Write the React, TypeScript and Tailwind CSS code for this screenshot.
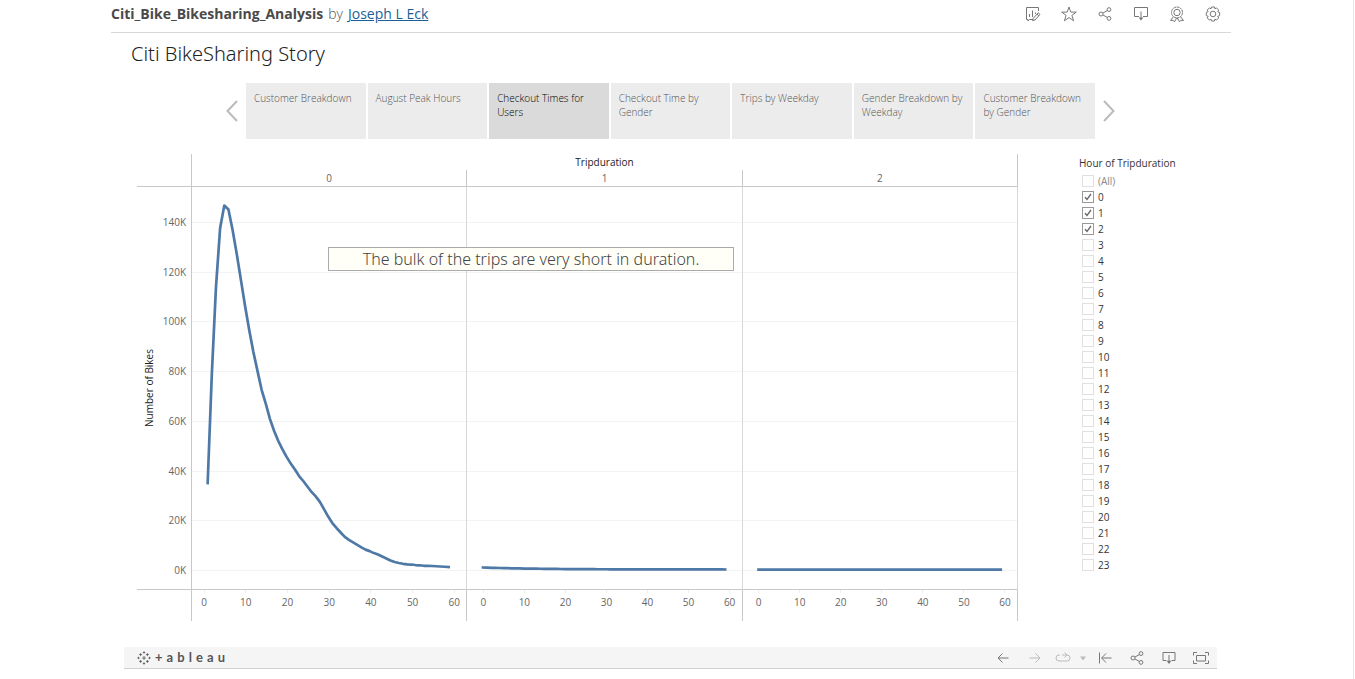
import { useState, type ReactNode } from "react";

const STORY_POINTS = [
  "Customer Breakdown",
  "August Peak Hours",
  "Checkout Times for Users",
  "Checkout Time by Gender",
  "Trips by Weekday",
  "Gender Breakdown by Weekday",
  "Customer Breakdown by Gender",
];

const Y_TICKS = [140, 120, 100, 80, 60, 40, 20, 0];
const X_TICKS = [0, 10, 20, 30, 40, 50, 60];

// Thousands of trips for each minute within the hour.
const HOUR_0 = [
  35.2, 79, 114, 137.8, 146.8, 145.2, 137, 127.3, 116.9, 106.4, 96.7, 87.9, 80.2, 72.6, 67, 60.9, 56.1, 52.1, 48.7,
  45.7, 43, 40.6, 38, 36, 33.8, 31.6, 29.8, 27.6, 24.7, 21.7, 19.1, 17.1, 15.3, 13.5, 12.3, 11.3, 10.3, 9.3, 8.4, 7.8,
  7, 6.4, 5.6, 4.8, 4, 3.4, 3, 2.7, 2.5, 2.4, 2.2, 2.1, 1.9, 1.9, 1.8, 1.7, 1.6, 1.5, 1.4,
];
const HOUR_1 = Array.from({ length: 60 }, (_, m) => 0.4 + 0.8 * Math.exp(-m / 14));
const HOUR_2 = Array.from({ length: 60 }, () => 0.35);

const PANES = [
  { label: "0", start: 1, values: HOUR_0, origin: 11.5, unit: 4.15, axis: "pl-0.5 pr-0.5" },
  { label: "1", start: 0, values: HOUR_1, origin: 16, unit: 4.1, axis: "pl-1.5 pr-0.5" },
  { label: "2", start: 0, values: HOUR_2, origin: 15.5, unit: 4.1, axis: "pl-1.5 pr-0.5" },
];

const PLOT_HEIGHT = 402;
const yOf = (k: number) => 383.5 - k * 2.486;

function Icon({ children, className = "size-4", box = 16 }: { children: ReactNode; className?: string; box?: number }) {
  return (
    <svg
      viewBox={`0 0 ${box} ${box}`}
      className={className}
      fill="none"
      stroke="currentColor"
      strokeWidth="1"
      aria-hidden="true"
    >
      {children}
    </svg>
  );
}

function IconButton({ label, children, disabled }: { label: string; children: ReactNode; disabled?: boolean }) {
  return (
    <button type="button" aria-label={label} disabled={disabled} className="text-[#777] disabled:text-[#bbb]">
      {children}
    </button>
  );
}

const EditIcon = () => (
  <Icon>
    <path d="M8 13.5H4.5l-1.5 1.5v-1.5H1.5v-12h12V5M4.5 8v3M7.500 4.500V11M10.500 6.500V8" />
    <path d="m8.200 12.400 5-5.600 1.800 1.600-5 5.600-2.300.7zM12 8.200l1.800 1.600" />
  </Icon>
);
const StarIcon = () => (
  <Icon>
    <path d="m8 1 1.800 5.100h5.500l-4.400 3.300 1.700 5.400L8 11.500l-4.600 3.300 1.700-5.400L.7 6.100h5.500z" />
  </Icon>
);
const ShareIcon = () => (
  <Icon>
    <circle cx="4" cy="8" r="2" />
    <circle cx="12" cy="3.600" r="1.900" />
    <circle cx="12" cy="12.400" r="1.900" />
    <path d="M6 7 10.300 4.600M6 9l4.300 2.400" />
  </Icon>
);
const DownloadIcon = () => (
  <Icon>
    <path d="M6 10.500H1.500v-9h13v9H10M8 5.500v8" />
    <path d="M5.600 11.500h4.800L8 14.500z" fill="currentColor" stroke="none" />
  </Icon>
);
const AwardIcon = () => (
  <Icon>
    <circle cx="8" cy="6.500" r="5.500" strokeDasharray="2.600 .5" />
    <circle cx="8" cy="6.500" r="3.200" />
    <path d="M4.300 10.800 1.500 14.500l2.700-.2 1.300 1.500 2.300-4M11.700 10.800l2.800 3.700-2.700-.2-1.300 1.500-2.300-4" />
  </Icon>
);
const GearIcon = () => (
  <Icon>
    <path d="M6.500 1h3l.4 1.800 1.600-.9 2.200 2.200-1 1.600 1.900.7v3.200l-1.900.7 1 1.600-2.200 2.200-1.600-1-.4 1.900h-3l-.5-1.900-1.600 1-2.200-2.200 1-1.600-1.900-.7V6.400l1.900-.7-1-1.600 2.200-2.200 1.600.9z" />
    <circle cx="8" cy="8" r="2.800" />
  </Icon>
);

function Header() {
  return (
    <header className="flex h-[33px] items-center justify-between border-b border-[#d8d8d8] pb-1 pr-2.5">
      <div className="flex items-baseline gap-[5px] text-sm">
        <h1 className="font-bold text-[#4a4a4a]">Citi_Bike_Bikesharing_Analysis</h1>
        <span className="font-light text-[#555]">by</span>
        <a href="#author" className="text-[#1a5f96] underline">
          Joseph L Eck
        </a>
      </div>
      <nav aria-label="Workbook actions" className="flex items-center gap-5">
        <IconButton label="Edit"><EditIcon /></IconButton>
        <IconButton label="Favorite"><StarIcon /></IconButton>
        <IconButton label="Share"><ShareIcon /></IconButton>
        <IconButton label="Download"><DownloadIcon /></IconButton>
        <IconButton label="Nominate"><AwardIcon /></IconButton>
        <IconButton label="Settings"><GearIcon /></IconButton>
      </nav>
    </header>
  );
}

function StoryNav({ active, onSelect }: { active: number; onSelect: (i: number) => void }) {
  return (
    <nav aria-label="Story points" className="ml-[102px] mr-[103px] flex items-center gap-2">
      <button type="button" aria-label="Previous" onClick={() => onSelect(Math.max(0, active - 1))} className="w-3 text-[#bbb]">
        <svg viewBox="0 0 12 22" className="h-[22px] w-3" fill="none" stroke="currentColor" strokeWidth="2">
          <path d="M11 1 1.500 11 11 21" />
        </svg>
      </button>
      <div className="grid flex-1 grid-cols-7 gap-0.5">
        {STORY_POINTS.map((point, i) => (
          <button
            key={point}
            type="button"
            onClick={() => onSelect(i)}
            className={`flex h-14 items-start p-2 text-left text-[10px] font-light leading-[14px] ${
              i === active ? "bg-[#dadada] text-black" : "bg-[#ececec] text-[#555]"
            }`}
          >
            {point}
          </button>
        ))}
      </div>
      <button
        type="button"
        aria-label="Next"
        onClick={() => onSelect(Math.min(STORY_POINTS.length - 1, active + 1))}
        className="w-3 text-[#bbb]"
      >
        <svg viewBox="0 0 12 22" className="h-[22px] w-3" fill="none" stroke="currentColor" strokeWidth="2">
          <path d="m1 1 9.500 10L1 21" />
        </svg>
      </button>
    </nav>
  );
}

function Chart() {
  return (
    <figure className="relative flex-1 text-[10px] leading-4 text-[#666]">
      <div className="grid grid-cols-[55px_repeat(3,1fr)]">
        <div className="row-span-2 border-b border-r border-[#c8c8c8]" />
        <div className="col-span-3 border-r border-[#c8c8c8] text-center text-[#222]">Tripduration</div>
        {PANES.map((pane) => (
          <div key={pane.label} className="h-[17px] border-b border-r border-[#c8c8c8] text-center">
            {pane.label}
          </div>
        ))}

        <div className="flex justify-between border-b border-r border-[#c8c8c8] pr-[5px]">
          <span className="rotate-180 self-center pr-1 text-center text-[#222] [writing-mode:vertical-rl]">
            Number of Bikes
          </span>
          <div className="flex flex-col justify-between pb-3 pt-7 text-right leading-[14px]">
            {Y_TICKS.map((t) => (
              <span key={t}>{t}K</span>
            ))}
          </div>
        </div>
        {PANES.map((pane) => (
          <div key={pane.label} className="h-[403px] border-b border-r border-b-[#c8c8c8] border-r-[#d8d8d8]">
            <svg
              viewBox={`0 0 274 ${PLOT_HEIGHT}`}
              preserveAspectRatio="none"
              className="block h-[402px] w-full"
              role="img"
              aria-label={`Number of bikes by minute, hour ${pane.label}`}
            >
              {Y_TICKS.map((t) => (
                <line
                  key={t}
                  x1="0"
                  x2="274"
                  y1={Math.floor(yOf(t)) + 0.5}
                  y2={Math.floor(yOf(t)) + 0.5}
                  stroke="#f3f3f3"
                />
              ))}
              <polyline
                fill="none"
                stroke="#4e79a7"
                strokeWidth="2.700"
                strokeLinejoin="round"
                strokeLinecap="square"
                vectorEffect="non-scaling-stroke"
                points={pane.values.map((v, i) => `${pane.origin + (i + pane.start) * pane.unit},${yOf(v)}`).join(" ")}
              />
            </svg>
          </div>
        ))}

        <div className="border-r border-[#c8c8c8]" />
        {PANES.map((pane) => (
          <div key={pane.label} className={`flex h-[31px] justify-between border-r border-[#c8c8c8] ${pane.axis}`}>
            {X_TICKS.map((t) => (
              <span key={t} className="flex w-5 flex-col items-center">
                <i className="h-[3px] w-px bg-[#eee]" />
                <span className="pt-px">{t}</span>
              </span>
            ))}
          </div>
        ))}
      </div>
      <figcaption className="absolute left-[191px] top-[93px] flex h-6 w-[406px] items-center justify-center border border-[#aaa] bg-[#fffff8] font-['Noto_Sans',sans-serif] text-base font-light text-[#444]">
        The bulk of the trips are very short in duration.
      </figcaption>
    </figure>
  );
}

function HourFilter() {
  const [selected, setSelected] = useState<string[]>(["0", "1", "2"]);
  const options = ["(All)", ...Array.from({ length: 24 }, (_, i) => String(i))];
  const toggle = (o: string) => setSelected((s) => (s.includes(o) ? s.filter((x) => x !== o) : [...s, o]));
  return (
    <fieldset className="w-[138px] pt-px text-[10px] leading-4 text-[#333]">
      <legend className="pb-px pt-px">Hour of Tripduration</legend>
      {options.map((o) => (
        <label key={o} className="flex h-4 items-center gap-1 pl-[3px]">
          <span className="grid size-3">
            <input
              type="checkbox"
              checked={selected.includes(o)}
              onChange={() => toggle(o)}
              className="peer col-start-1 row-start-1 size-3 appearance-none border border-[#e0e0e0] bg-white checked:border-[#999]"
            />
            <svg
              viewBox="0 0 12 12"
              className="pointer-events-none invisible col-start-1 row-start-1 size-3 peer-checked:visible"
              fill="none"
              stroke="#666"
              strokeWidth="1.300"
            >
              <path d="M3 6.200 5 8.500 9 3" />
            </svg>
          </span>
          <span className={o === "(All)" ? "text-[#888]" : ""}>{o}</span>
        </label>
      ))}
    </fieldset>
  );
}

function TableauMark() {
  const plus = (x: number, y: number, r: number) => `M${x - r} ${y}h${2 * r}M${x} ${y - r}v${2 * r}`;
  return (
    <Icon className="size-3.5" box={14}>
      <path
        strokeWidth=".8"
        d={[
          plus(7, 7, 2),
          plus(7, 1.5, 1.2),
          plus(7, 12.5, 1.2),
          plus(1.5, 7, 1.2),
          plus(12.5, 7, 1.2),
          plus(3.6, 3.6, 1.5),
          plus(10.4, 3.6, 1.5),
          plus(3.6, 10.4, 1.5),
          plus(10.4, 10.4, 1.5),
        ].join("")}
      />
    </Icon>
  );
}

function Toolbar() {
  return (
    <footer className="ml-[13px] mr-3.5 flex h-[22px] items-center justify-between border-b border-[#cfcfcf] bg-[#f5f5f5] pl-[13px] pr-2">
      <a href="#tableau" aria-label="Tableau" className="flex items-center gap-1 text-[#555]">
        <TableauMark />
        <span className="flex w-[70px] justify-between pb-0.5 font-['Lato',sans-serif] text-[13px] font-bold leading-4">
          {"+ableau".split("").map((c, i) => (
            <span key={i}>{c}</span>
          ))}
        </span>
      </a>
      <div className="flex items-center gap-4">
        <div className="flex items-center gap-3">
          <div className="flex items-center gap-4">
            <IconButton label="Undo">
              <Icon><path d="M13.500 8H3M7.500 3.500 3 8l4.500 4.500" /></Icon>
            </IconButton>
            <IconButton label="Redo" disabled>
              <Icon><path d="M2.500 8H13M8.500 3.500 13 8l-4.500 4.500" /></Icon>
            </IconButton>
          </div>
          <div className="flex items-center gap-2">
            <IconButton label="Replay" disabled>
              <Icon>
                <path d="M5 5H4Q1 5 1 8t3 3h8q3 0 3-3t-3-3H7M9.500 2.500 12 5 9.500 7.500" />
              </Icon>
            </IconButton>
            <IconButton label="Replay options" disabled>
              <svg viewBox="0 0 8 16" className="h-4 w-2" fill="currentColor" aria-hidden="true">
                <path d="M1 6.500h6L4 10.500z" />
              </svg>
            </IconButton>
            <IconButton label="Revert">
              <span className="block pl-0.5">
                <Icon><path d="M2.500 2.500v11M14.500 8H5M9 3.500 4.500 8 9 12.500" /></Icon>
              </span>
            </IconButton>
          </div>
        </div>
        <IconButton label="Share view"><ShareIcon /></IconButton>
        <IconButton label="Download view">
          <Icon>
            <path d="M5.500 10.500h-3.500v-8h12v8h-3.500M8 5v8" />
            <path d="M5.600 10.800h4.800L8 14z" fill="currentColor" stroke="none" />
          </Icon>
        </IconButton>
        <IconButton label="Full screen">
          <Icon>
            <path d="M3.500 5.500h9v5.500h-9zM.5 5.500v-3H4M12 2.500h3.500v3M15.500 10.500v3H12M4 13.500H.5v-3" />
          </Icon>
        </IconButton>
      </div>
    </footer>
  );
}

export default function App() {
  const [active, setActive] = useState(2);
  return (
    <div className="mr-px min-h-screen border-r border-[#e8e8e8] bg-white pr-[11px] font-['Open_Sans','Noto_Sans',sans-serif]">
      <div className="mx-auto w-full max-w-[1120px]">
        <Header />
        <main className="px-[13px]">
          <h2 className="pb-[15px] pl-[7px] pt-[7px] font-['Noto_Sans',sans-serif] text-xl font-light leading-7 text-[#222]">
            Citi BikeSharing Story
          </h2>
          <StoryNav active={active} onSelect={setActive} />
          <div className="flex gap-[61px] pl-[13px] pr-px pt-[15px] pb-[26px]">
            <Chart />
            <HourFilter />
          </div>
        </main>
        <Toolbar />
      </div>
    </div>
  );
}
